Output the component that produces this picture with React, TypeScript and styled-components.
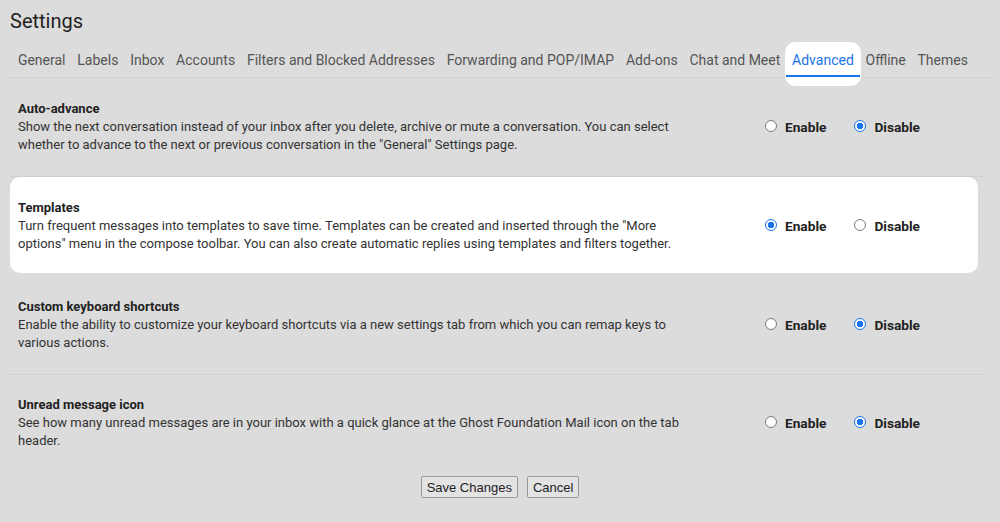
import React from "react";
import styled, { createGlobalStyle } from "styled-components";

const GlobalStyle = createGlobalStyle`
  html, body {
    margin: 0;
    padding: 0;
    background: #dcdcdc;
  }
  body {
    font-family: Roboto, "Noto Sans", "Liberation Sans", sans-serif;
    color: #222;
  }
`;

const Page = styled.div`
  width: 1000px;
  height: 522px;
  background: #dcdcdc;
  overflow: hidden;
`;

const Title = styled.h1`
  margin: 0;
  padding: 9px 0 0 10px;
  font-size: 20px;
  font-weight: 400;
  line-height: 24px;
  color: #222;
`;

const TabBar = styled.nav`
  display: flex;
  align-items: stretch;
  margin: 9px 10px 0 10px;
  padding-left: 2px;
  height: 35px;
  border-bottom: 1px solid #cfcfcf;
`;

const Tab = styled.div<{ $active?: boolean }>`
  position: relative;
  display: flex;
  align-items: center;
  padding: 0 5.9px;
  font-size: 14px;
  color: ${(p) => (p.$active ? "#1a73e8" : "#555")};
  white-space: nowrap;

  ${(p) =>
    p.$active &&
    `
    &::before {
      content: "";
      position: absolute;
      left: -1px;
      right: -1px;
      top: 0;
      bottom: -9px;
      background: #fff;
      border-radius: 10px;
      z-index: 0;
    }
    &::after {
      content: "";
      position: absolute;
      left: 0;
      right: 0;
      bottom: 0;
      height: 2px;
      background: #1a73e8;
      z-index: 1;
    }
  `}
`;

const TabLabel = styled.span`
  position: relative;
  z-index: 1;
`;

const Rows = styled.div`
  margin: 1px 17px 0 10px;
`;

const Row = styled.section<{ $highlight?: boolean }>`
  display: grid;
  grid-template-columns: 1fr ${(p) => (p.$highlight ? "213px" : "218px")};
  align-items: center;
  padding: ${(p) => (p.$highlight ? "22px 0 20px 8px" : "21px 0 22px 8px")};
  border-bottom: ${(p) => (p.$highlight ? "none" : "1px solid #cfcfcf")};
  background: ${(p) => (p.$highlight ? "#fff" : "transparent")};
  border-radius: ${(p) => (p.$highlight ? "10px" : "0")};
  margin: ${(p) => (p.$highlight ? "0 5px 4px 0" : "0")};

  &:last-child {
    border-bottom: none;
  }
`;

const TextBlock = styled.div`
  max-width: 670px;
`;

const RowTitle = styled.div`
  font-size: 13px;
  font-weight: 700;
  line-height: 18px;
  color: #222;
`;

const RowDesc = styled.div`
  font-size: 13px;
  line-height: 18px;
  color: #333;
`;

const RadioGroup = styled.div`
  display: flex;
  align-items: center;
  gap: 28px;
`;

const RadioOption = styled.label`
  display: flex;
  align-items: center;
  gap: 8px;
  font-size: 13.7px;
  font-weight: 700;
  color: #222;
`;

const RadioCircle = styled.span<{ $checked?: boolean }>`
  box-sizing: border-box;
  width: 12px;
  height: 12px;
  border-radius: 50%;
  border: 1px solid ${(p) => (p.$checked ? "#1a73e8" : "#7a7a7a")};
  background: ${(p) =>
    p.$checked
      ? "radial-gradient(circle, #1a73e8 0 3px, #fff 3.5px)"
      : "#fff"};
  margin-top: -2px;
`;

const Footer = styled.div`
  display: flex;
  justify-content: center;
  gap: 9px;
  padding-top: 4px;
`;

const Button = styled.button`
  font-family: "Liberation Sans", Arial, sans-serif;
  font-size: 13px;
  color: #222;
  background: #e3e3e3;
  border: 1px solid #9a9a9a;
  border-radius: 2px;
  height: 22px;
  padding: 0 5px;
`;

const tabs = [
  "General",
  "Labels",
  "Inbox",
  "Accounts",
  "Filters and Blocked Addresses",
  "Forwarding and POP/IMAP",
  "Add-ons",
  "Chat and Meet",
  "Advanced",
  "Offline",
  "Themes",
];

const settings = [
  {
    title: "Auto-advance",
    desc: 'Show the next conversation instead of your inbox after you delete, archive or mute a conversation. You can select whether to advance to the next or previous conversation in the "General" Settings page.',
    enabled: false,
  },
  {
    title: "Templates",
    desc: 'Turn frequent messages into templates to save time. Templates can be created and inserted through the "More options" menu in the compose toolbar. You can also create automatic replies using templates and filters together.',
    enabled: true,
    highlight: true,
  },
  {
    title: "Custom keyboard shortcuts",
    desc: "Enable the ability to customize your keyboard shortcuts via a new settings tab from which you can remap keys to various actions.",
    enabled: false,
  },
  {
    title: "Unread message icon",
    desc: "See how many unread messages are in your inbox with a quick glance at the Ghost Foundation Mail icon on the tab header.",
    enabled: false,
  },
];

const App = () => {
  return (
    <Page>
      <GlobalStyle />
      <Title>Settings</Title>
      <TabBar>
        {tabs.map((t) => (
          <Tab key={t} $active={t === "Advanced"}>
            <TabLabel>{t}</TabLabel>
          </Tab>
        ))}
      </TabBar>
      <Rows>
        {settings.map((s) => (
          <Row key={s.title} $highlight={s.highlight}>
            <TextBlock>
              <RowTitle>{s.title}</RowTitle>
              <RowDesc>{s.desc}</RowDesc>
            </TextBlock>
            <RadioGroup>
              <RadioOption>
                <RadioCircle $checked={s.enabled} />
                Enable
              </RadioOption>
              <RadioOption>
                <RadioCircle $checked={!s.enabled} />
                Disable
              </RadioOption>
            </RadioGroup>
          </Row>
        ))}
      </Rows>
      <Footer>
        <Button>Save Changes</Button>
        <Button>Cancel</Button>
      </Footer>
    </Page>
  );
};

export default App;
